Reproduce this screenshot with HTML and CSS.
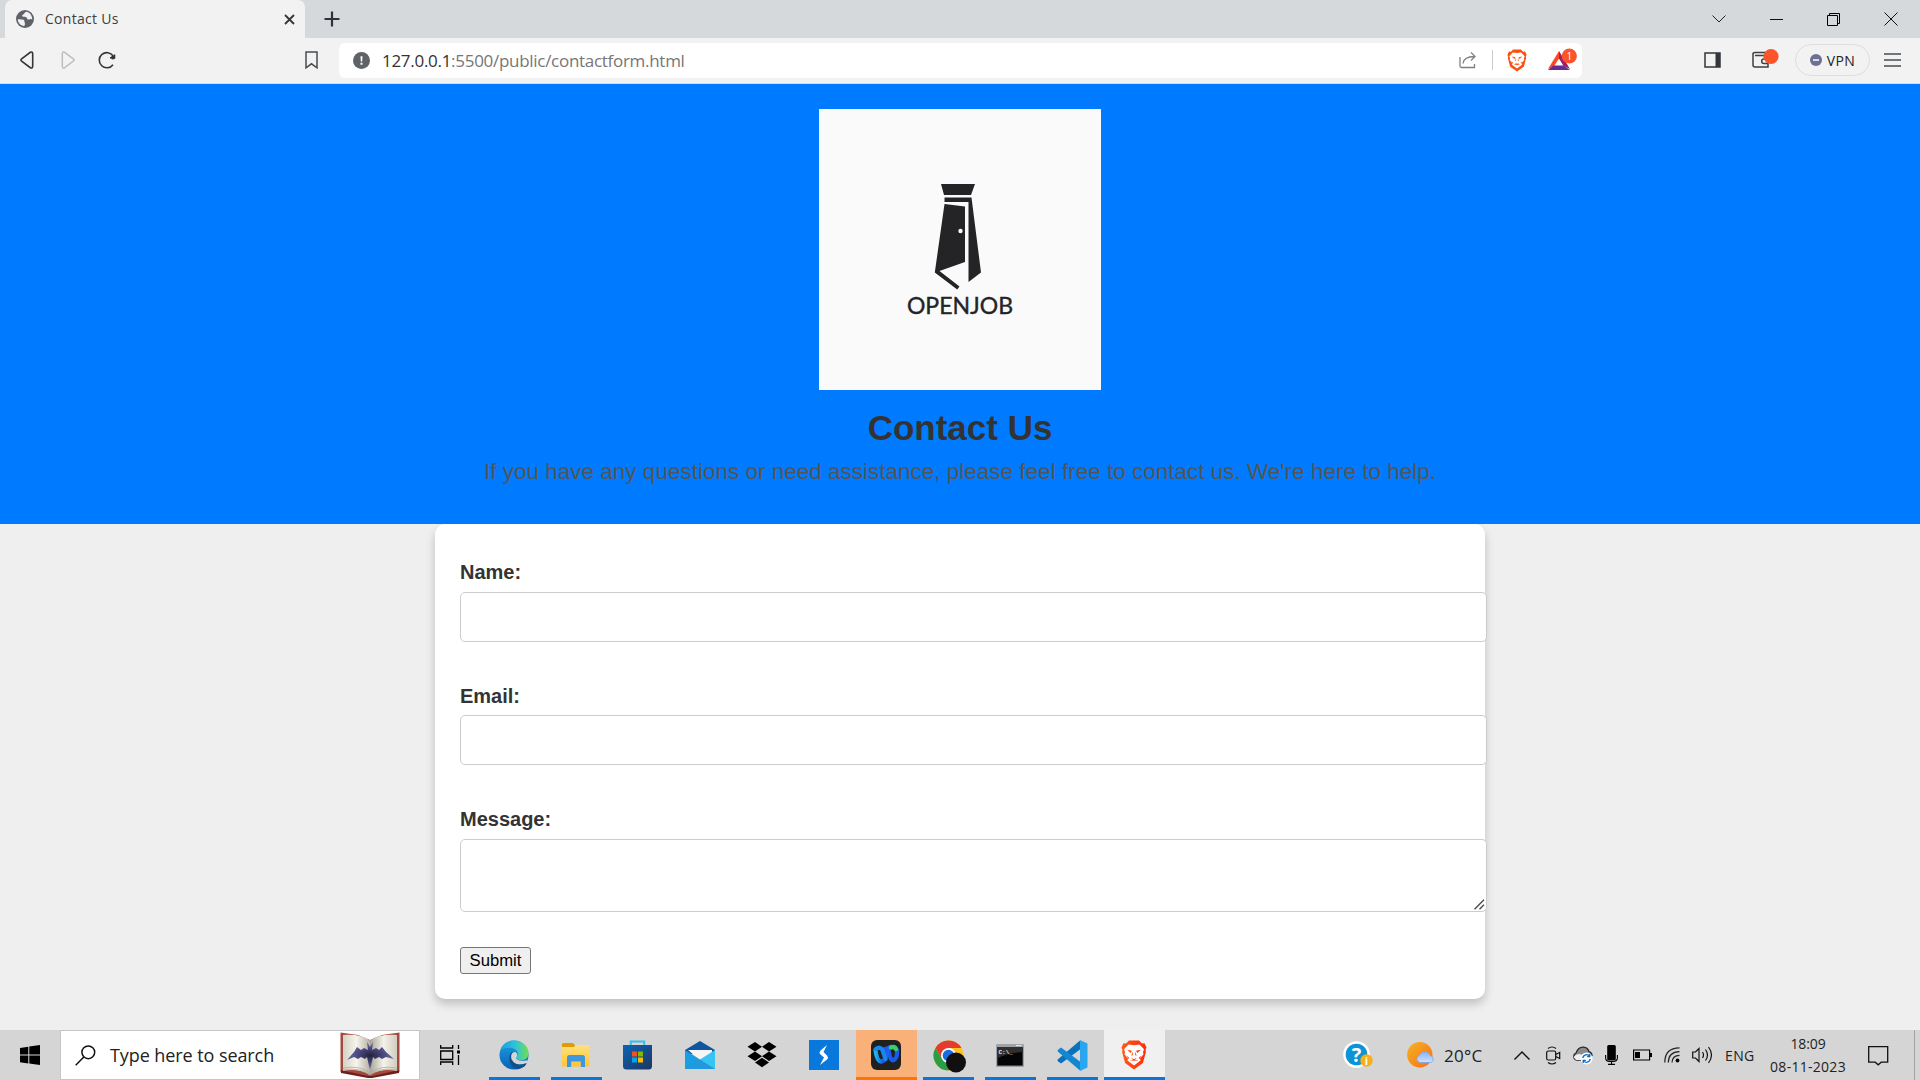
FILE: index.html
```html
<!DOCTYPE html>
<html lang="en">
<head>
<meta charset="utf-8">
<title>Contact Us</title>
<link rel="stylesheet" href="styles.css">
</head>
<body>
<svg width="0" height="0" class="defs" aria-hidden="true">
  <defs>
    <linearGradient id="gEdgeA" x1="0" y1="0" x2="1" y2="0"><stop offset="0" stop-color="#1c9ddd"/><stop offset=".55" stop-color="#31c4d8"/><stop offset="1" stop-color="#6fe04b"/></linearGradient>
    <linearGradient id="gEdgeB" x1="0" y1="0" x2="0" y2="1"><stop offset="0" stop-color="#1ba0e2"/><stop offset="1" stop-color="#0a63b5"/></linearGradient>
    <linearGradient id="gBag" x1="0" y1="0" x2="1" y2="1"><stop offset="0" stop-color="#0b64b5"/><stop offset="1" stop-color="#1f3560"/></linearGradient>
    <linearGradient id="gFolder" x1="0" y1="0" x2="0" y2="1"><stop offset="0" stop-color="#ffe07e"/><stop offset="1" stop-color="#fdc634"/></linearGradient>
    <linearGradient id="gSun" x1="0" y1="0" x2="1" y2="1"><stop offset="0" stop-color="#f3b521"/><stop offset="1" stop-color="#fb6c1a"/></linearGradient>
    <linearGradient id="gCloud" x1="0" y1="0" x2="0" y2="1"><stop offset="0" stop-color="#86b2f8"/><stop offset="1" stop-color="#cfe0fc"/></linearGradient>
    <linearGradient id="gBrave" x1="0" y1="0" x2="1" y2="0"><stop offset="0" stop-color="#ff5a18"/><stop offset="1" stop-color="#fb2d0c"/></linearGradient>
    <linearGradient id="gPageL" x1="0" y1="0" x2="1" y2="0"><stop offset="0" stop-color="#d5d2c3"/><stop offset=".5" stop-color="#f6f4ec"/><stop offset="1" stop-color="#b5b1a4"/></linearGradient>
    <linearGradient id="gPageR" x1="0" y1="0" x2="1" y2="0"><stop offset="0" stop-color="#a9a598"/><stop offset=".5" stop-color="#f4f2ea"/><stop offset="1" stop-color="#d1cebf"/></linearGradient>
    <radialGradient id="gInk"><stop offset="0" stop-color="#23223a"/><stop offset=".35" stop-color="#3c3a68"/><stop offset="1" stop-color="#6a69a8"/></radialGradient>
    <linearGradient id="gWebex" x1="0" y1="0" x2="1" y2="0"><stop offset="0" stop-color="#16b9f0"/><stop offset=".5" stop-color="#1950ee"/><stop offset="1" stop-color="#2f6df0"/></linearGradient>
    <symbol id="lion" viewBox="0 0 26 30">
      <path d="M8 .5h10l3 3 2.500-.3 2 4.300-1 2.500.4 2-3 11L13 29.500 4.100 23l-3-11 .4-2-1-2.500 2-4.300 2.500.3z"/>
      <path fill="#fff" d="M7.500 4.500l5.500.8 5.500-.8L23 9.300l-1 2.800.5 2.200-3.500 4.300.5 1.900-6.500 5-6.500-5 .5-1.900-3.500-4.300.5-2.200-1-2.800z"/>
      <path d="M6 9.800l5 .9-1.300 2.300zM20 9.800l-5 .9 1.300 2.300zM10.300 17.800l2.700 1.400 2.700-1.400-1.700 2.300h-2zM5.500 15.500l2.800 2.300-.8 1.200zM20.500 15.500l-2.800 2.300.8 1.200zM8.500 20.300l4.500-1 4.500 1-4.500.5zM11.600 11.500l.3 3.500-1.500 1zM14.400 11.500l-.3 3.500 1.500 1z"/>
    </symbol>
  </defs>
</svg>

<div class="tabstrip">
  <div class="tab">
    <svg width="18" height="18" viewBox="0 0 18 18"><circle cx="9" cy="9" r="9" fill="#5f6368"/><path d="M10 1.800C8 2.500 8.800 4 7.200 4.500 5.600 5 6 6.600 7.500 6.800c1.800.2 3.300 0 3.600 1.700.2 1.200 1.500 1.200 2.700.8 1.300-.4 2-.1 2.400.3.300-4-2.700-7.600-6.200-7.800z" fill="#f2f2f2"/><path d="M1.800 9.200c2 .2 4.600-.1 6 .9 1.200.9.300 2 1 2.800.6.600 0 2.300-.7 3.200C4.500 15.500 1.900 12.700 1.800 9.200z" fill="#f2f2f2"/></svg>
    <span class="tab-title">Contact Us</span>
    <svg width="11" height="11" viewBox="0 0 11 11" stroke="#333639" stroke-width="1.800"><path d="M1 1l9 9M10 1l-9 9"/></svg>
  </div>
  <svg class="plus" width="16" height="16" viewBox="0 0 16 16" stroke="#2f3337" stroke-width="2.200"><path d="M8 .5v15M.5 8h15"/></svg>
  <div class="winbtns">
    <svg width="14" height="8" viewBox="0 0 14 8" fill="none" stroke="#222"><path d="M.5.5L7 7l6.500-6.500"/></svg>
    <svg width="13" height="13" viewBox="0 0 13 13" stroke="#111"><path d="M0 6.500h13"/></svg>
    <svg width="13" height="13" viewBox="0 0 13 13" fill="none" stroke="#000"><path d="M.5 2.500h10v10H.5zM2.500 2.500v-2h10v10h-2"/></svg>
    <svg width="14" height="14" viewBox="0 0 14 14" stroke="#111"><path d="M.5.5l13 13M13.500.5l-13 13"/></svg>
  </div>
</div>

<div class="toolbar">
  <svg class="back" width="14" height="18" viewBox="0 0 14 18" fill="none" stroke="#33373b" stroke-width="1.600"><path d="M1.300 8.200L10.300 1.300Q12.700.3 12.700 3v12q0 2.700-2.400 1.700L1.300 9.800Q.5 9 1.300 8.200z"/></svg>
  <svg class="fwd" width="14" height="18" viewBox="0 0 14 18" fill="none" stroke="#bcbec0" stroke-width="1.500"><path d="M12.700 8.200L3.700 1.300Q1.300.3 1.300 3v12q0 2.700 2.400 1.700l9-6.900q.8-.8 0-1.600z"/></svg>
  <svg class="reload" width="18" height="18" viewBox="0 0 18 18" fill="none" stroke="#33373b" stroke-width="1.600"><path d="M15.200 5A7.600 7.600 0 1 0 15 13.700"/><circle cx="15" cy="6.500" r="2" fill="#33373b" stroke="none"/><path d="M12 6.800h4.500V3.500"/></svg>
  <svg class="bookmark" width="13" height="18" viewBox="0 0 13 18" fill="none" stroke="#4a4d51" stroke-width="1.500"><path d="M1 1h11v15.800l-5.500-4-5.500 4z"/></svg>
  <div class="omnibox">
    <svg width="17" height="17" viewBox="0 0 17 17"><circle cx="8.500" cy="8.500" r="8.500" fill="#5f6368"/><path d="M7.500 4.200h2L9.200 9.500H7.800zM7.500 10.800h2v2h-2z" fill="#fff"/></svg>
    <span class="url"><span class="host">127.0.0.1</span>:5500/public/contactform.html</span>
    <svg class="share" width="18" height="18" viewBox="0 0 18 18" fill="none" stroke="#808080" stroke-width="1.300"><path d="M1 6v9q0 1.500 1.500 1.500h13V13M4 12.500C4.500 8 8 5.500 15.500 5.500M12 1.500l4 4-4 4"/></svg>
    <span class="sep"></span>
    <svg class="shield" width="20" height="23" fill="#fb5010"><use href="#lion"/></svg>
    <svg class="bat" width="30" height="24" viewBox="0 0 30 24"><path d="M12 3v7.500L6.500 19 1 21z" fill="#ff4724"/><path d="M12 3l11 18-6.500-3L12 10.500z" fill="#9e1f63"/><path d="M1 22l5.500-4.500h10L23 22z" fill="#662d91"/><circle cx="22.300" cy="8" r="7.600" fill="#fb542b"/><text x="22.300" y="11.500" font-size="10" text-anchor="middle" fill="#fff">1</text></svg>
  </div>
  <svg class="side" width="17" height="16" viewBox="0 0 17 16"><path d="M1 1h15v14H1z" fill="none" stroke="#33373b" stroke-width="1.500"/><path d="M11.500 1H16v14h-4.500z" fill="#33373b"/></svg>
  <svg class="wallet" width="28" height="24" viewBox="0 0 28 24"><g fill="none" stroke="#3c4043" stroke-width="1.500"><path d="M3 7.500h13V19H3q-2 0-2-2V6q0-1.500 2-1.500h10M16 11h-4q-2.300 0-2.300 2.200T12 15.500h4"/></g><circle cx="19" cy="8.500" r="7.600" fill="#fb542b"/></svg>
  <div class="vpn"><svg width="12" height="12" viewBox="0 0 12 12"><circle cx="6" cy="6" r="6" fill="#6c7093"/><path d="M3 5.300h6v1.500H3z" fill="#fff"/></svg><span>VPN</span></div>
  <svg class="menu" width="17" height="14" viewBox="0 0 17 14" stroke="#4a4d51" stroke-width="1.400"><path d="M0 1h17M0 7h17M0 13h17"/></svg>
</div>

<main class="page">
  <header class="hero">
    <div class="logo">
      <svg width="48" height="107" viewBox="0 0 48 107" fill="#242427"><path d="M7 0h34l-4 11H10zM10.500 13.500h27L47 88.500l-12.500 9.500V18H10.500zM10.500 20L31 22.500V78L5.500 87l20 15.500-2.300 3L.8 88.500z"/><circle cx="26.500" cy="47" r="2.200" fill="#fafafa"/></svg>
      <span>OPENJOB</span>
    </div>
    <h1>Contact Us</h1>
    <p>If you have any questions or need assistance, please feel free to contact us. We're here to help.</p>
  </header>
  <form class="card">
    <label for="name">Name:</label>
    <input id="name" type="text">
    <label for="email">Email:</label>
    <input id="email" type="email">
    <label for="message">Message:</label>
    <div class="area">
      <textarea id="message"></textarea>
      <svg class="grip" width="11" height="11" viewBox="0 0 11 11" stroke="#4d4d4d" stroke-width="1.500"><path d="M.5 10.200L10 .8M5.500 10.200L10 5.800"/></svg>
    </div>
    <button type="button">Submit</button>
  </form>
</main>

<footer class="taskbar">
  <div class="start"><svg width="20" height="20" viewBox="0 0 20 20"><path d="M0 2.900L8.300 1.700v7.800H0zM9.300 1.500L20 0v9.500H9.300zM0 10.500h8.300v7.900L0 17.200zM9.300 10.500H20V20L9.300 18.500z"/></svg></div>
  <div class="search">
    <svg width="21" height="21" viewBox="0 0 21 21" fill="none" stroke="#111" stroke-width="1.500"><circle cx="13.300" cy="7.300" r="6.400"/><path d="M8.800 12L.7 20.300"/></svg>
    <span>Type here to search</span>
    <svg class="book" width="60" height="47" viewBox="0 0 60 47"><path d="M.5.500L18 3l12 5 12-5L59.500.500V40L32 45.500h-4L.5 40z" fill="#a4493f"/><path d="M1 38l27 6h4l27-6v3l-27 5h-4L1 41z" fill="#6e211c"/><path d="M3 3q19-1 27 5.500V43Q18 36 3 39z" fill="url(#gPageL)"/><path d="M57 3q-19-1-27 5.500V43q12-7 27-4z" fill="url(#gPageR)"/><path d="M3 36q17-3 27 5 10-8 27-5M3 38q17-3 27 5 10-8 27-5" fill="none" stroke="#a9a595" stroke-width=".7"/><path d="M30 15l-3-5 1 8-4-2-3 2-4-3-3 5-7 8 7-3 4 2 3-2 4 2 2-2 2 9 1 3 1-3 2-9 2 2 4-2 3 2 4-2 8 2-8-7-4-5-3 3-3-2-4 2 1-8z" fill="url(#gInk)"/></svg>
  </div>
  <div class="taskview"><svg width="21" height="20" viewBox="0 0 21 20" fill="none" stroke="#000" stroke-width="1.300"><path d="M.7 0v3h12V0M.7 6h12v8.500H.7zM.7 20v-3h12v3M18.500 0v4M18.500 10v10"/><path d="M17 5.500h3v3h-3z" fill="#000" stroke="none"/></svg></div>
  <div class="apps">
    <div class="app run"><svg width="30" height="30" viewBox="0 0 31 31"><circle cx="15.500" cy="15.500" r="15" fill="url(#gEdgeB)"/><path d="M1.500 10.500C4 3.500 9 .5 15.500.5c9 0 15 6.500 15 13 0 5-3.500 7.500-7.500 7.500-3.500 0-5.500-1.500-5-3 2-2 2.500-6-1.500-8.500-5-2.700-11-1.500-15 1z" fill="url(#gEdgeA)"/><path d="M12.500 13c-4 6.500-1 16.500 7 17.300 4-1 7.500-3 9-6.300-6 3-13 1-14.500-4-.8-2.500-.5-5.500.5-7.500z" fill="#11508f"/><path d="M17 12.500c-4.500 0-5.200 4.500-3.800 8 1.500 3.500 6 6.500 14.300 3.500l3-1.500-2-1.700c-4.500 1.500-12 .2-10.500-3 1.300-1.600 1.300-3.700-1-5.300z" fill="#d5d5d5"/><path d="M13.200 20.500c2 5 9 6.800 15.300 3.500-1 2-2 3-3.500 4-6 1-11-2-11.800-7.500z" fill="#11508f"/></svg></div>
    <div class="app run"><svg width="28" height="24" viewBox="0 0 28 24"><path d="M0 1.500Q0 0 1.500 0H11l2 2.500V5H0z" fill="#e09c04"/><path d="M0 4h12l2-2h13.500v21.500H0z" fill="url(#gFolder)"/><path d="M5 24V14.500Q5 12 7.500 12h13q2.500 0 2.500 2.500V24h-4.200v-5.500H9.200V24z" fill="#3f97df"/></svg></div>
    <div class="app store"><svg width="29" height="30" viewBox="0 0 29 30"><path d="M7.800 6V1.500h13.400V6" fill="none" stroke="#32bdf5" stroke-width="2"/><path d="M0 5h29v21q0 3.500-3.500 3.500h-22Q0 29.500 0 26z" fill="url(#gBag)"/><path d="M9 11.500h5v5H9z" fill="#f25022"/><path d="M15 11.500h5v5h-5z" fill="#7fba00"/><path d="M9 17.500h5v5H9z" fill="#00a4ef"/><path d="M15 17.500h5v5h-5z" fill="#ffb900"/></svg></div>
    <div class="app"><svg width="30" height="28" viewBox="0 0 30 28"><path d="M0 9L15 0l15 9v4H0z" fill="#0e569f"/><path d="M3 9h24v6l-10 6z" fill="#f5f5f5"/><path d="M0 9l30 19H0z" fill="#1b9de2"/><path d="M30 9v19H27L15 18.500z" fill="#36c5f1"/><path d="M15 18.500L0 28h30z" fill="#2298dd"/></svg></div>
    <div class="app"><svg width="30" height="26" viewBox="0 0 30 26"><path d="M8 0l7 4.700-7 4.700L.5 4.700zM22 0l7.500 4.700L22 9.400l-7-4.700zM.5 14.200L8 9.500l7 4.700L8 19zM22 9.500l7.500 4.700L22 19l-7-4.800zM8 20.500l7-4.700 7 4.700-7 4.800z"/></svg></div>
    <div class="app"><svg width="30" height="30" viewBox="0 0 30 30"><path d="M0 0h30v30H0z" fill="#0878dc"/><path d="M18 5l-6.500 5.500q-1.800 2 0 4l3.500 3-4 7.500 7-5.500q1.800-2 0-4l-3.500-3.500z" fill="#fff"/></svg></div>
    <div class="app alert"><svg width="30" height="30" viewBox="0 0 30 30"><rect width="30" height="30" rx="6" fill="#20211f"/><g fill="none" stroke-width="4.300" stroke-linecap="round"><path d="M13.500 9.500q3-2.500 4.500 3 1.500 9 5 7.500 3.500-2 3-10" stroke="#1a5bec"/><path d="M4.500 10Q6 22 10.500 21.500q4-.5 5-8 1-6.500 5-6.500" stroke="url(#gWebex)"/><path d="M5 9q4-3 6.500 1 1.500 5 3 9" stroke="#1687f0"/><path d="M20 7.500q3.500-1.500 5 1.500" stroke="#35d06a"/></g></svg></div>
    <div class="app run"><svg class="chrome" width="34" height="33" viewBox="0 0 34 33"><circle cx="15.500" cy="15.500" r="15" fill="#fcc31e"/><path d="M2.500 8A15 15 0 0 1 28.500 8H15.500L9 19z" fill="#e33b2e"/><path d="M2.500 8A15 15 0 0 0 15.500 30.500L22 19 9 19z" fill="#2a9d47"/><circle cx="15.500" cy="15.500" r="7.500" fill="#fff"/><circle cx="15.500" cy="15.500" r="5.800" fill="#1a6ae0"/><circle cx="23" cy="22.500" r="10" fill="#120f10"/></svg></div>
    <div class="app run"><svg width="28" height="23" viewBox="0 0 28 23"><rect width="28" height="23" rx="1" fill="#9ea3a8"/><path d="M1.300 3h25.400v18.600H1.300z" fill="#050505"/><path d="M1.300 3h25.400v5Q12 9 1.300 14z" fill="#303030"/><path d="M20 1.500h5.500" stroke="#e8e8e8"/><text x="2.500" y="9.500" font-size="6" font-weight="700" fill="#eee" class="mono">C:\_</text></svg></div>
    <div class="app run"><svg width="31" height="31" viewBox="0 0 31 31"><path d="M23 0l7.500 3.500v24L23 31z" fill="#2aa5f0"/><path d="M23 .5v9L4 23.500 1 21.300q-1-1 0-2z" fill="#0873bb"/><path d="M23 30.500v-9L4 7.500 1 9.700q-1 1 0 2z" fill="#1486d2"/></svg></div>
    <div class="app active"><svg width="26" height="30" fill="url(#gBrave)"><use href="#lion"/></svg></div>
  </div>
  <div class="tray">
    <svg class="help" width="30" height="28" viewBox="0 0 30 28"><circle cx="13.500" cy="13.500" r="13.300" fill="#fff"/><circle cx="13.500" cy="13.500" r="10.800" fill="#0c93d8"/><text x="13.500" y="21" font-size="20" font-weight="700" text-anchor="middle" fill="#fff">?</text><circle cx="23.500" cy="19.500" r="6.200" fill="#f5b01c"/><text x="23.500" y="23.500" font-size="11" font-weight="700" text-anchor="middle" fill="#fff">i</text></svg>
    <svg class="sun" width="28" height="26" viewBox="0 0 28 26"><circle cx="12.800" cy="12.800" r="12.700" fill="url(#gSun)"/><path d="M13 20.500a3.700 3.700 0 0 1-.5-7.200A5.700 5.700 0 0 1 23.200 13.500 3.700 3.700 0 0 1 24 20.500z" fill="url(#gCloud)" stroke="#7fa6ea" stroke-width=".8"/></svg>
    <span class="temp">20°C</span>
    <svg class="chev" width="16" height="9" viewBox="0 0 16 9" fill="none" stroke="#111" stroke-width="1.400"><path d="M.5 8.500L8 1l7.500 7.500"/></svg>
    <svg class="cam" width="15" height="19" viewBox="0 0 15 19" fill="none" stroke="#111" stroke-width="1.200"><rect x=".7" y="5" width="9" height="9" rx="1.500"/><path d="M9.700 8.500l4-2v6l-4-2M2 2.500Q6-.5 10 2.500M2 16.500q4 3 8 0"/></svg>
    <svg class="onedrive" width="21" height="19" viewBox="0 0 21 19"><path d="M4 14a3.800 3.800 0 0 1 0-7Q6.500.8 11.500 1.200 15.500 1.500 17 5.500q3 1 3 4L14 14z" fill="#8c8c8c" stroke="#222" stroke-width="1.300"/><path d="M1.500 11Q8 4 14 14H4z" fill="#eee"/><circle cx="14.500" cy="12.500" r="6" fill="#fff"/><path d="M10.800 12a3.800 3.800 0 0 1 7-1.500m0-2.500v2.700h-2.700M18.200 13a3.800 3.800 0 0 1-7 1.500m0 2.500v-2.700h2.700" fill="none" stroke="#0c6bc9" stroke-width="1.300"/></svg>
    <svg class="mic" width="13" height="20" viewBox="0 0 13 20"><rect x="2.200" width="8.600" height="15.500" rx="1.500"/><path d="M.6 10v2.500q0 4 4 4h3.800q4 0 4-4V10M6.500 16.500v3M3 19.400h7" fill="none" stroke="#000" stroke-width="1.100"/></svg>
    <svg class="battery" width="19" height="12" viewBox="0 0 19 12"><path d="M.6 1h16v10H.6z" fill="none" stroke="#000" stroke-width="1.200"/><path d="M2 3h5v6H2zM17 4h2v4h-2z"/></svg>
    <svg class="wifi" width="16" height="16" viewBox="0 0 16 16" fill="none" stroke="#222" stroke-width="1.200"><path d="M.8 15.500Q.8.800 15.500.8M4.300 15.500Q4.500 4.800 15.500 4.600M8 15.500Q8.300 8.500 15.500 8.300"/><circle cx="13.500" cy="13.500" r="1.900" fill="#000" stroke="none"/></svg>
    <svg class="vol" width="21" height="18" viewBox="0 0 21 18" fill="none" stroke="#111" stroke-width="1.200"><path d="M.7 6h2.800L7 2.500v13L3.500 12H.7zM10.500 6q2 3 0 6M13.500 3.500q4 5.500 0 11M16.500 1q6 8 0 16"/></svg>
    <span class="lang">ENG</span>
    <div class="clock"><span>18:09</span><span class="date">08-11-2023</span></div>
    <svg class="note" width="21" height="21" viewBox="0 0 21 21" fill="none" stroke="#111" stroke-width="1.300"><path d="M.7 1.700h19v15.500h-6.500l-3 2.600-3-2.600H.7z"/></svg>
    <span class="peek"></span>
  </div>
</footer>
</body>
</html>
```
FILE: styles.css
```css
* { box-sizing: border-box; }
body { margin: 0; width: 1920px; height: 1080px; overflow: hidden; display: flex; flex-direction: column; background: #efefef; font-family: "Open Sans", "Noto Sans", sans-serif; color: #222; }
svg { display: block; flex: none; }
.defs { position: absolute; }

.tabstrip { flex: none; height: 38px; display: flex; align-items: center; background: #d5d9dc; padding-left: 5px; }
.tab { width: 300px; height: 38px; display: flex; align-items: center; background: #f2f2f2; border-radius: 7px 7px 0 0; padding: 0 10px 0 11px; }
.tab-title { flex: 1; margin-left: 11px; padding-bottom: 2px; font-size: 14px; letter-spacing: .3px; color: #3c3f43; }
.plus { margin-left: 19px; }
.winbtns { margin-left: auto; display: flex; align-items: center; padding-right: 22px; gap: 44px; }

.toolbar { flex: none; height: 46px; display: flex; align-items: center; background: #f2f2f2; border-bottom: 1px solid #d9dcde; padding: 0 0 1px 20px; }
.fwd { margin-left: 27px; }
.reload { margin-left: 23px; }
.bookmark { margin-left: 189px; }
.omnibox { margin-left: 21px; width: 1243px; height: 35px; display: flex; align-items: center; background: #fff; border-radius: 6px; padding-left: 14px; }
.url { margin-left: 12px; flex: 1; font-size: 17px; letter-spacing: -.29px; color: #767676; white-space: nowrap; }
.host { color: #333; }
.sep { width: 1px; height: 20px; background: #ccc; margin: 0 14px 0 15px; }
.bat { margin: 0 5px 0 20px; }
.side { margin-left: 122px; }
.wallet { margin-left: 31px; }
.vpn { margin-left: 15px; width: 75px; height: 32px; border: 1px solid #dedede; border-radius: 16px; display: flex; align-items: center; justify-content: center; gap: 5px; font-size: 14px; letter-spacing: .4px; }
.menu { margin-left: 14px; }

.page { flex: 1; min-height: 0; font-family: "Liberation Sans", Arial, sans-serif; }
.hero { height: 440px; background: #007bff; padding-top: 25px; display: flex; flex-direction: column; align-items: center; }
.logo { flex: none; width: 282px; height: 281px; background: #fafafa; display: flex; flex-direction: column; align-items: center; padding-top: 75px; }
.logo svg { margin-right: 4px; }
.logo span { font-family: Lato, sans-serif; font-size: 23px; line-height: 24px; margin-top: 2px; color: #242427; -webkit-text-stroke: .4px #242427; }
.hero h1 { margin: 18px 0 0; font-size: 35px; line-height: 40px; color: #333; }
.hero p { margin: 11px 0 0; font-size: 22.5px; line-height: 26px; color: #555; }
.card { width: 1050px; height: 475px; margin: 0 auto; padding: 37px 25px 0; background: #fff; border-radius: 10px; box-shadow: 0 5px 10px rgba(0,0,0,.2); }
.card label { display: block; height: 23px; line-height: 23px; margin-bottom: 8px; font-size: 20px; font-weight: 700; color: #333; }
.card label[for="email"] { margin-bottom: 7px; }
.card input, .card textarea { display: block; width: 1027px; height: 50px; margin: 0 0 43px; border: 1px solid #ccc; border-radius: 5px; background: #fff; padding: 12px; resize: none; overflow: hidden; outline: 0; }
.area { position: relative; width: 1027px; }
.card textarea { height: 73px; margin-bottom: 35px; }
.grip { position: absolute; right: 2px; bottom: 2px; }
.card button { display: block; width: 71px; height: 27px; padding: 0; font: 16.670px "Liberation Sans", Arial, sans-serif; color: #000; background: #efefef; border: 1px solid #767676; border-radius: 3px; }

.taskbar { flex: none; height: 50px; display: flex; background: #d5d5d5; }
.start { width: 60px; display: flex; align-items: center; justify-content: center; }
.search { width: 360px; display: flex; align-items: center; background: #fff; border: 1px solid #c6c6c6; padding: 0 19px 0 14px; }
.search span { margin-left: 14px; flex: 1; font-size: 18px; letter-spacing: -.08px; white-space: nowrap; }
.taskview { width: 63px; display: flex; align-items: center; padding-left: 20px; }
.apps { display: flex; }
.app { width: 62px; display: flex; align-items: center; justify-content: center; }
.store { padding-right: 1px; }
.run { background: linear-gradient(#0678d7, #0678d7) center bottom / 51px 3px no-repeat; }
.alert { width: 61px; margin-left: 1px; background: #f9b079; border-bottom: 3px solid #ff7300; padding: 3px 1px 0 0; }
.active { width: 61px; margin-left: 1px; background: #f0f0f0; border-bottom: 3px solid #0678d7; padding: 3px 2px 0 0; }
.chrome { margin: 2px 0 0 3px; }
.mono { font-family: "Liberation Mono", monospace; }
.tray { flex: 1; display: flex; align-items: center; padding-left: 178px; }
.sun { margin-left: 34px; }
.temp { margin-left: 9px; width: 40px; font-size: 17px; letter-spacing: .3px; white-space: nowrap; }
.chev { margin-left: 30px; }
.cam { margin-left: 16px; }
.onedrive { margin-left: 11px; }
.mic { margin-left: 12px; }
.battery { margin-left: 15px; }
.wifi { margin-left: 12px; }
.vol { margin-left: 12px; }
.lang { margin-left: 12px; width: 30px; font-size: 14px; letter-spacing: .4px; white-space: nowrap; }
.clock { margin-left: 13px; width: 80px; display: flex; flex-direction: column; align-items: center; font-size: 14px; line-height: 23px; letter-spacing: -.1px; white-space: nowrap; }
.date { letter-spacing: .28px; }
.note { margin-left: 20px; }
.peek { width: 1px; height: 50px; background: #a5a5a5; margin-left: 25px; }
```
